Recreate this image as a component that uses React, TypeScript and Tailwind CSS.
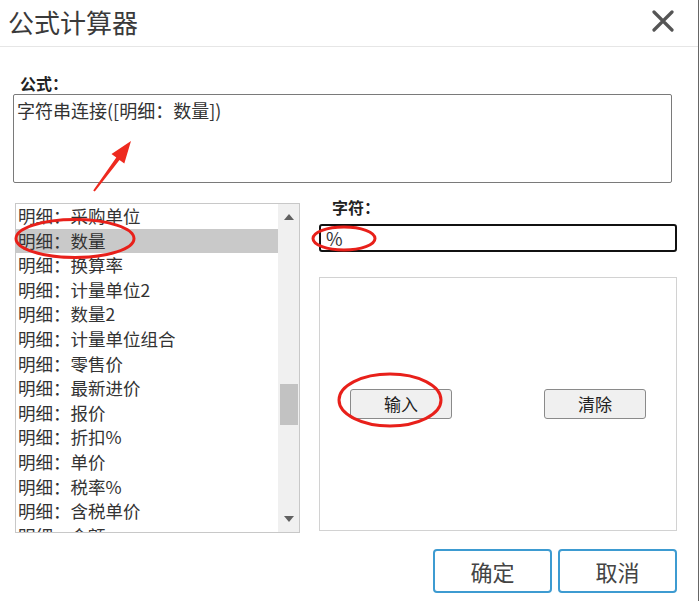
import React from "react";

const items = [
  "采购单位",
  "数量",
  "换算率",
  "计量单位2",
  "数量2",
  "计量单位组合",
  "零售价",
  "最新进价",
  "报价",
  "折扣%",
  "单价",
  "税率%",
  "含税单价",
  "金额",
];

const font = { fontFamily: '"Noto Sans CJK SC", "Noto Sans", sans-serif' };

function CloseIcon() {
  return (
    <svg width="22" height="22" viewBox="0 0 22 22">
      <path d="M2 2 L20 20 M20 2 L2 20" stroke="#555" strokeWidth="3.2" strokeLinecap="round" />
    </svg>
  );
}

function Annotations() {
  // red marks drawn over the dialog
  return (
    <svg className="absolute inset-0 pointer-events-none" width="700" height="601" viewBox="0 0 700 601">
      <ellipse cx="75" cy="238.5" rx="59" ry="19" fill="none" stroke="#e8201a" strokeWidth="3" />
      <ellipse cx="344" cy="238.5" rx="31" ry="11.5" fill="none" stroke="#e8201a" strokeWidth="3" />
      <ellipse cx="390" cy="400" rx="51" ry="26" fill="none" stroke="#e8201a" strokeWidth="3" />
      <polygon
        points="93.2,190.4 116.3,157.5 111.5,153.9 131,141 124.3,163.5 119.5,159.9 94.8,191.6"
        fill="#ee2a1f"
      />
    </svg>
  );
}

export default function App() {
  return (
    <div className="relative w-[699px] h-[601px] bg-white border-r border-[#666] text-[#333] overflow-hidden" style={font}>
      {/* title bar */}
      <div className="h-[47px] border-b border-[#e6e6e6] flex items-center justify-between pl-[8px] pr-[24px]">
        <span className="text-[26px] leading-[30px] text-[#3a3a3a] -mt-[2px]">公式计算器</span>
        <div className="-mt-[4px]">
          <CloseIcon />
        </div>
      </div>

      <div className="ml-[20px] mt-[26px] h-[20px] leading-[20px] text-[16px] font-bold text-[#222]">公式：</div>
      <div className="ml-[13px] mt-[1px] w-[659px] h-[89px] border border-[#7a7a7a] rounded-[2px] pl-[3px] pt-[3px] text-[18px] leading-[24px] text-[#333]">
        字符串连接([明细：数量])
      </div>

      <div className="flex items-start mt-[14px]">
        {/* field list */}
        <div className="ml-[15px] mt-[6px] w-[285px] h-[330px] border border-[#c8c8c8] flex overflow-hidden">
          <div className="flex-1 overflow-hidden">
            {items.map((it, i) => (
              <div
                key={it}
                className={`h-[24.6px] leading-[24.6px] pl-[2px] text-[17.5px] whitespace-nowrap ${i === 1 ? "bg-[#c9c9c9]" : ""}`}
              >
                明细：{it}
              </div>
            ))}
          </div>
          <div className="w-[21px] h-full bg-[#f0f0f0] flex flex-col items-center justify-between py-[10px]">
            <svg width="10" height="6" viewBox="0 0 10 6">
              <polygon points="5,0 10,6 0,6" fill="#606060" />
            </svg>
            <div className="w-[18px] h-[41px] bg-[#c2c2c2] mt-[164px]" />
            <div className="flex-1" />
            <svg width="10" height="6" viewBox="0 0 10 6">
              <polygon points="0,0 10,0 5,6" fill="#606060" />
            </svg>
          </div>
        </div>

        {/* character input */}
        <div className="ml-[19px] w-[358px] flex flex-col">
          <div className="pl-[13px] h-[20px] leading-[20px] text-[16px] font-bold text-[#222]">字符：</div>
          <div className="mt-[7px] h-[28px] border-2 border-[#111] rounded-[3px] pl-[5px] text-[18px] leading-[24px] text-[#333]">
            %
          </div>
          <div className="mt-[25px] h-[254px] border border-[#d2d2d2] flex justify-between items-start px-[30px] pt-[111px]">
            <button className="w-[102px] h-[30px] bg-[#f0f0f0] border border-[#8a8a8a] rounded-[3px] text-[17px] leading-[28px] text-[#222]">
              输入
            </button>
            <button className="w-[102px] h-[30px] bg-[#f0f0f0] border border-[#8a8a8a] rounded-[3px] text-[17px] leading-[28px] text-[#222]">
              清除
            </button>
          </div>
        </div>
      </div>

      <div className="flex justify-end gap-[6px] mt-[16px] pr-[21px]">
        <button className="w-[119px] h-[44px] border-2 border-[#3d9bd1] rounded-[4px] bg-white text-[22px] leading-[40px] text-[#444]">
          确定
        </button>
        <button className="w-[119px] h-[44px] border-2 border-[#3d9bd1] rounded-[4px] bg-white text-[22px] leading-[40px] text-[#444]">
          取消
        </button>
      </div>

      <Annotations />
    </div>
  );
}
